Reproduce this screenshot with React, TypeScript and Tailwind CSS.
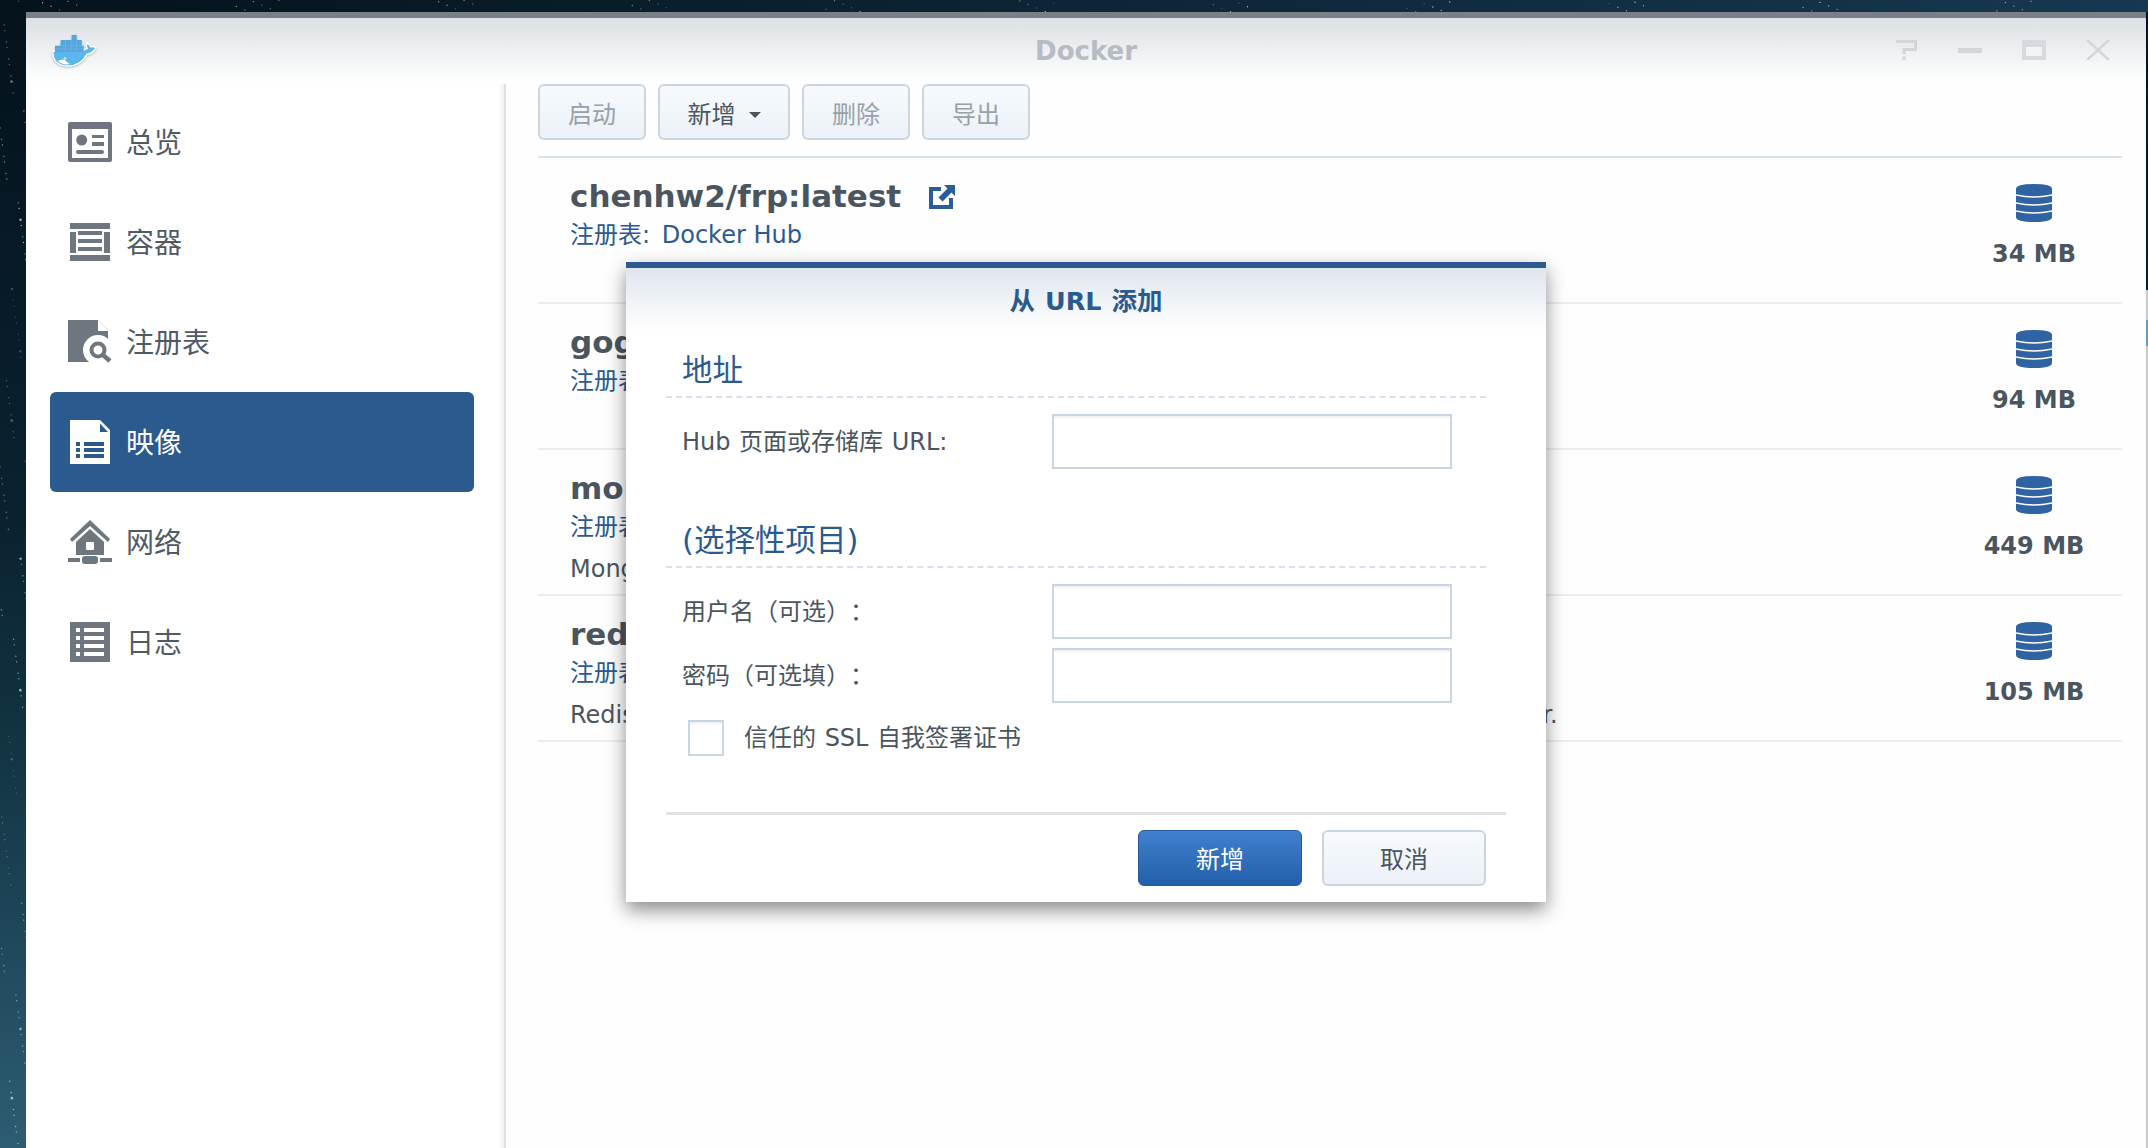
import React from 'react';

const cjk = 'font-["Noto_Sans_CJK_SC",sans-serif]';
const mixed = 'font-["DejaVu_Sans","Noto_Sans_CJK_SC",sans-serif]';

// scattered points for the wallpaper that shows around the window
const stars = Array.from({ length: 170 }, (_, i) => {
    const a = (i * 7919 + 131) % 1009;
    const b = (i * 104729 + 17) % 1013;
    if (i % 3 === 0) {
        return { x: (a / 1009) * 2148, y: (b / 1013) * 12, r: 0.7, o: 0.25 + (b % 5) / 10 };
    }
    return { x: (a / 1009) * 26, y: (b / 1013) * 1148, r: i % 11 === 0 ? 1.3 : 0.7, o: 0.2 + (b % 5) / 10 };
});

const images = [
    { name: 'chenhw2/frp:latest', size: '34 MB' },
    { name: 'gogs/gogs:latest', size: '94 MB' },
    {
        name: 'mongo:latest',
        size: '449 MB',
        description: 'MongoDB document databases provide high availability and easy scalability.',
    },
    {
        name: 'redis:latest',
        size: '105 MB',
        description: 'Redis is an open source key-value store that functions as a data structure server.',
    },
];

function DockerLogo() {
    return (
        <svg width="46" height="34" viewBox="-1 -1 46 34" className="drop-shadow-[0_1px_1px_rgba(0,0,0,0.25)]">
            <path
                d="M1 17H31C32 15 33.500 14.500 35 14.500C34 12 34.500 10 35.500 8.500C37 10 38 11.500 38.500 12.800C40 12.300 42 12.300 44 13.800C41.500 18 38 20 35 20.300C31 28 24 32 16 32C6 32 0 26 1 17Z"
                fill="#5cb6ec"
                stroke="#fff"
                strokeWidth="1.400"
            />
            <path d="M19.700 1h5v5h5v5.700h2v6.600H3v-6.600h5.700V6h11Z" fill="#55a6dc" />
            <path d="M8.700 11.700h21M3 15h28M13.500 6v12M19 6v12M24.500 6v12" stroke="#6fb6e4" strokeWidth="0.700" />
            <path d="M6 27c3-1.500 6-2 9 1 1 1 2 1.500 3 2-5 1-9 0-12-3Z" fill="#fff" />
            <circle cx="13" cy="24.500" r="1.300" fill="#fff" />
            <circle cx="13" cy="24.500" r="0.500" fill="#2b6f9e" />
        </svg>
    );
}

function OverviewIcon() {
    return (
        <svg width="44" height="40" viewBox="0 0 44 40">
            <rect width="44" height="40" rx="2" fill="#6e7780" />
            <rect x="4" y="7" width="36" height="29" fill="#fff" />
            <circle cx="13.700" cy="18" r="5.500" fill="#6e7780" />
            <rect x="24" y="13" width="12" height="3" fill="#6e7780" />
            <rect x="24" y="20" width="12" height="4" fill="#6e7780" />
            <rect x="8" y="28" width="28" height="4" rx="2" fill="#6e7780" />
        </svg>
    );
}

function ContainerIcon() {
    return (
        <svg width="40" height="38" viewBox="0 0 40 38" fill="#6e7780">
            <rect width="40" height="6" />
            <rect y="32" width="40" height="6" />
            <rect y="9" width="6" height="21" />
            <rect x="34" y="9" width="6" height="21" />
            <rect x="8" y="8" width="24" height="4" />
            <rect x="8" y="16" width="24" height="4" />
            <rect x="8" y="24" width="24" height="4" />
        </svg>
    );
}

function RegistryIcon() {
    return (
        <svg width="44" height="44" viewBox="0 0 44 44">
            <path d="M0 0H30L40 10V42H0Z" fill="#6e7780" />
            <path d="M30 0L40 10V11H30Z" fill="#fff" />
            <circle cx="30" cy="30" r="15" fill="#fff" />
            <path d="M44 44L34 35L44 40Z" fill="#fff" />
            <circle cx="30" cy="30" r="6.500" fill="none" stroke="#6e7780" strokeWidth="4" />
            <path d="M35 35L42 41" stroke="#6e7780" strokeWidth="4.500" />
        </svg>
    );
}

function ImageIcon() {
    return (
        <svg width="40" height="44" viewBox="0 0 40 44">
            <path d="M0 0H30L40 10V44H0Z" fill="#fff" />
            <path d="M30 3.500L38 12H30Z" fill="#2b5a8e" />
            <g fill="#2b5a8e">
                <rect x="6" y="22" width="4" height="4" />
                <rect x="6" y="28" width="4" height="4" />
                <rect x="6" y="34" width="4" height="4" />
                <rect x="14" y="22" width="20" height="4" />
                <rect x="14" y="28" width="20" height="4" />
                <rect x="14" y="34" width="20" height="4" />
            </g>
        </svg>
    );
}

function NetworkIcon() {
    return (
        <svg width="44" height="44" viewBox="0 0 44 44" fill="#6e7780">
            <path d="M22 0L42 19L40 22L22 6L4 22L2 19Z" />
            <path d="M8 22L22 9L36 22V35H8Z" />
            <rect x="18" y="22" width="8" height="8" rx="1" fill="#fff" />
            <rect x="14" y="36" width="16" height="8" rx="3" />
            <rect y="38" width="12" height="4" />
            <rect x="32" y="38" width="12" height="4" />
        </svg>
    );
}

function LogIcon() {
    return (
        <svg width="40" height="40" viewBox="0 0 40 40">
            <rect width="40" height="40" fill="#6e7780" />
            <g fill="#fff">
                <rect x="6" y="6" width="4" height="4" />
                <rect x="14" y="6" width="20" height="4" />
                <rect x="6" y="14" width="4" height="4" />
                <rect x="14" y="14" width="20" height="4" />
                <rect x="6" y="22" width="4" height="4" />
                <rect x="14" y="22" width="20" height="4" />
                <rect x="6" y="30" width="4" height="4" />
                <rect x="14" y="30" width="20" height="4" />
            </g>
        </svg>
    );
}

function ExternalLinkIcon() {
    return (
        <svg width="26" height="24" viewBox="0 0 26 24" fill="#2b5d9b" className="shrink-0">
            <path d="M0 2H12V6H4V20H20V13H24V24H0Z" />
            <path d="M15 0H26V11L22.500 7.500L13.500 16.500L9.500 12.500L18.500 3.500Z" />
        </svg>
    );
}

function DatabaseIcon() {
    return (
        <svg width="36" height="38" viewBox="0 0 36 38">
            <path d="M0 5Q0 0 18 0Q36 0 36 5V33Q36 38 18 38Q0 38 0 33Z" fill="#2f63a3" />
            <path d="M0 11Q18 15 36 11M0 19Q18 23 36 19M0 27Q18 31 36 27" fill="none" stroke="#fff" strokeWidth="1.600" />
        </svg>
    );
}

function WindowControls() {
    return (
        <div className="flex items-center mr-[36px] gap-[40px]">
            <svg width="22" height="20" viewBox="0 0 22 20" fill="none" stroke="#d2d6da" strokeWidth="3">
                <path d="M0 1.500H19.500V9.500H8V14" />
                <path d="M8 16.500V20" />
            </svg>
            <div className="w-[24px] h-[5px] bg-[#d2d6da]" />
            <svg width="24" height="20" viewBox="0 0 24 20">
                <rect width="24" height="20" fill="#d6dade" />
                <rect x="4" y="7" width="16" height="9" fill="#f2f4f6" />
            </svg>
            <svg width="24" height="20" viewBox="0 0 24 20" stroke="#d2d6da" strokeWidth="2.400">
                <path d="M1 0L23 20M23 0L1 20" />
            </svg>
        </div>
    );
}

const navItems = [
    { label: '总览', icon: <OverviewIcon /> },
    { label: '容器', icon: <ContainerIcon /> },
    { label: '注册表', icon: <RegistryIcon /> },
    { label: '映像', icon: <ImageIcon />, active: true },
    { label: '网络', icon: <NetworkIcon /> },
    { label: '日志', icon: <LogIcon /> },
];

function Sidebar() {
    return (
        <aside className="w-[480px] shrink-0 mt-[2px] pt-[8px] border-r-2 border-[#dfdfdf] bg-[linear-gradient(to_right,#ffffff_98.800%,#f1f1f1_100%)]">
            {navItems.map((item) => (
                <div
                    key={item.label}
                    className={
                        item.active
                            ? 'ml-[24px] w-[424px] h-[100px] flex items-center pl-[18px] rounded-[6px] bg-[#2b5a8e] text-white'
                            : 'ml-[24px] w-[424px] h-[100px] flex items-center pl-[18px] rounded-[6px] text-[#505a64]'
                    }
                >
                    <div className="w-[44px] flex justify-center">{item.icon}</div>
                    <span className={`ml-[14px] mb-[2px] text-[28px] leading-none ${cjk}`}>{item.label}</span>
                </div>
            ))}
        </aside>
    );
}

function ToolButton({ label, width, enabled, caret }: { label: string; width: string; enabled?: boolean; caret?: boolean }) {
    return (
        <button
            className={`${width} h-[56px] pt-[1px] rounded-[6px] border-2 border-[#c9d5e2] bg-gradient-to-b from-[#f7fafd] to-[#ebf1f7] flex items-center justify-center text-[24px] leading-none ${cjk} ${
                enabled ? 'text-[#4b5560]' : 'text-[#98a1aa]'
            }`}
        >
            {label}
            {caret && <span className="ml-[13px] mt-[4px] w-0 h-0 border-x-[6px] border-x-transparent border-t-[6px] border-t-[#4b5560]" />}
        </button>
    );
}

function ImageRow({ name, size, description }: { name: string; size: string; description?: string }) {
    return (
        <div className="h-[146px] border-b-2 border-[#e9eef3] flex justify-between">
            <div className={`pl-[32px] pt-[19px] whitespace-nowrap ${mixed}`}>
                <div className="h-[39px] flex items-center">
                    <span className="text-[31px] leading-[39px] font-bold text-[#4b5560]">{name}</span>
                    <span className="ml-[28px]">
                        <ExternalLinkIcon />
                    </span>
                </div>
                <div className="h-[39px] text-[24px] leading-[39px] text-[#2b5a92]">
                    <span className="mr-[4px]">注册表:</span> Docker Hub
                </div>
                {description && <div className="h-[39px] mt-[3px] text-[24px] leading-[39px] [word-spacing:1.050px] text-[#4b5560]">{description}</div>}
            </div>
            <div className="w-[176px] shrink-0 pt-[26px] flex flex-col items-center">
                <DatabaseIcon />
                <div className={`mt-[15px] text-[24px] leading-[34px] font-bold text-[#4b5560] whitespace-nowrap ${mixed}`}>{size}</div>
            </div>
        </div>
    );
}

function SectionHeading({ children, className }: { children: React.ReactNode; className: string }) {
    return (
        <div className={`h-[66px] mr-[20px] pl-[16px] pb-[7px] flex items-end border-b-2 border-dashed border-[#d6e1ed] ${className}`}>
            <span className="text-[30.500px] leading-[36px] text-[#2b5a92]">{children}</span>
        </div>
    );
}

function FieldRow({ label, className }: { label: string; className: string }) {
    return (
        <div className={`h-[55px] pl-[16px] flex items-center ${className}`}>
            <label className="w-[370px] shrink-0 text-[24px] leading-none text-[#4b5560]">{label}</label>
            <input className="w-[400px] h-[55px] border-2 border-[#c9d5e2] bg-white shadow-[inset_0_2px_1px_#f1f3f6] outline-none" />
        </div>
    );
}

function AddFromUrlDialog() {
    return (
        <div className={`absolute left-[626px] top-[262px] w-[920px] h-[640px] flex flex-col bg-white border-t-[6px] border-[#2b5a8e] shadow-[0_8px_18px_rgba(0,0,0,0.45)] [word-spacing:1px] [text-spacing-trim:space-all] ${mixed}`}>
            <div className="h-[64px] pt-[2px] shrink-0 flex items-center justify-center bg-gradient-to-b from-[#e0e6ef] to-white text-[25.500px] font-bold text-[#2b5a8e]">
                从 URL 添加
            </div>
            <div className="flex-1 px-[40px] flex flex-col">
                <SectionHeading className="">地址</SectionHeading>
                <FieldRow label="Hub 页面或存储库 URL:" className="mt-[16px]" />
                <SectionHeading className="mt-[33px]">(选择性项目)</SectionHeading>
                <FieldRow label="用户名（可选）：" className="mt-[16px]" />
                <FieldRow label="密码（可选填）：" className="mt-[9px]" />
                <div className="mt-[17px] pl-[22px] flex items-center">
                    <div className="w-[36px] h-[36px] border-2 border-[#c9d5e2] bg-white shadow-[inset_0_2px_1px_#f1f3f6]" />
                    <span className="ml-[20px] text-[24px] leading-none text-[#4b5560]">信任的 SSL 自我签署证书</span>
                </div>
                <div className="mt-auto h-[90px] border-t-[3px] border-[#e2e2e2] pt-[15px] pr-[20px] flex justify-end gap-[20px]">
                    <button className="w-[164px] h-[56px] pt-[3px] rounded-[6px] border border-[#24599f] bg-gradient-to-b from-[#4080cc] to-[#2360ac] text-white text-[24px] leading-none">
                        新增
                    </button>
                    <button className="w-[164px] h-[56px] pt-[3px] rounded-[6px] border-2 border-[#c9d5e2] bg-gradient-to-b from-[#f7fafd] to-[#ebf1f7] text-[#4b5560] text-[24px] leading-none">
                        取消
                    </button>
                </div>
            </div>
        </div>
    );
}

export default function App() {
    return (
        <div className="relative w-[2148px] h-[1148px] overflow-hidden bg-[linear-gradient(to_bottom,#04121c_0%,#0a2230_45%,#123443_65%,#2d5d73_100%)]">
            {/* wallpaper specks */}
            <svg className="absolute inset-0" width="2148" height="1148">
                <rect width="2148" height="12" fill="url(#topstrip)" />
                <defs>
                    <linearGradient id="topstrip">
                        <stop offset="0" stopColor="#04121c" />
                        <stop offset="1" stopColor="#163850" />
                    </linearGradient>
                </defs>
                {stars.map((s, i) => (
                    <circle key={i} cx={s.x} cy={s.y} r={s.r} fill="#fff" opacity={s.o} />
                ))}
                <rect x="2146" y="290" width="2" height="858" fill="#c9c9cc" />
                <rect x="2146" y="320" width="2" height="26" fill="#5aa0cc" />
            </svg>

            <div className="relative ml-[26px] mr-[2px] mt-[12px] h-[1136px] flex flex-col bg-[#fefefe] border-t-[6px] border-[#7a8087]">
                <header className="relative h-[64px] shrink-0 flex items-center justify-between pl-[25px] bg-gradient-to-b from-[#dcdfe3] to-white">
                    <DockerLogo />
                    <span className={`absolute left-0 right-0 top-[18px] text-center text-[26px] leading-[30px] font-bold text-[#b6bcc3] ${mixed}`}>Docker</span>
                    <WindowControls />
                </header>
                <div className="flex-1 flex min-h-0">
                    <Sidebar />
                    <main className="flex-1 min-w-0 pl-[32px] pr-[24px] pt-[2px]">
                        <div className="flex gap-[12px] pb-[16px] border-b-2 border-[#d9e3ed]">
                            <ToolButton label="启动" width="w-[108px]" />
                            <ToolButton label="新增" width="w-[132px]" enabled caret />
                            <ToolButton label="删除" width="w-[108px]" />
                            <ToolButton label="导出" width="w-[108px]" />
                        </div>
                        {images.map((image) => (
                            <ImageRow key={image.name} {...image} />
                        ))}
                    </main>
                </div>
            </div>

            <AddFromUrlDialog />
        </div>
    );
}
